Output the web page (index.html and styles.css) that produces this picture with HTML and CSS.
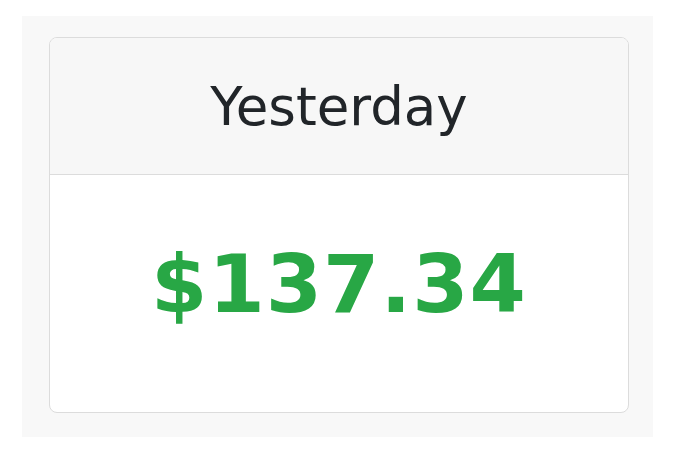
FILE: index.html
```html
<!DOCTYPE html>
<html lang="en">
<head>
  <meta charset="UTF-8">
  <meta name="viewport" content="width=device-width, initial-scale=1.0">
  <title>Yesterday</title>
  <link rel="stylesheet" href="styles.css">
</head>
<body>
  <div class="panel">
    <div class="card">
      <div class="card-header">Yesterday</div>
      <div class="card-body">
        <span class="amount">$137.34</span>
      </div>
    </div>
  </div>
</body>
</html>
```

FILE: styles.css
```css
/* Page */
body {
  margin: 0;
  padding: 16px 26px 22px 22px;
  background: #fff;
  font-family: "DejaVu Sans", Verdana, sans-serif;
  color: #212529;
}
/* Grey panel around the card */
.panel {
  background-color: #f8f8f8;
  padding: 21px 24px 24px 27px;
  height: 376px;
}
/* Card */
.card {
  background-color: #fff;
  border: 1px solid #dcdcdc;
  border-radius: 8px;
  overflow: hidden;
  display: flex;
  flex-direction: column;
  height: 374px;
}
.card-header {
  background-color: #f7f7f7;
  border-bottom: 1px solid #dcdcdc;
  height: 136px;
  display: flex;
  align-items: center;
  justify-content: center;
  font-size: 53px;
}
.card-body {
  flex: 1;
  display: flex;
  align-items: center;
  justify-content: center;
  padding-bottom: 20px;
}
.amount {
  color: #28a745;
  font-weight: bold;
  font-size: 81px;
  letter-spacing: 1px;
}
```
